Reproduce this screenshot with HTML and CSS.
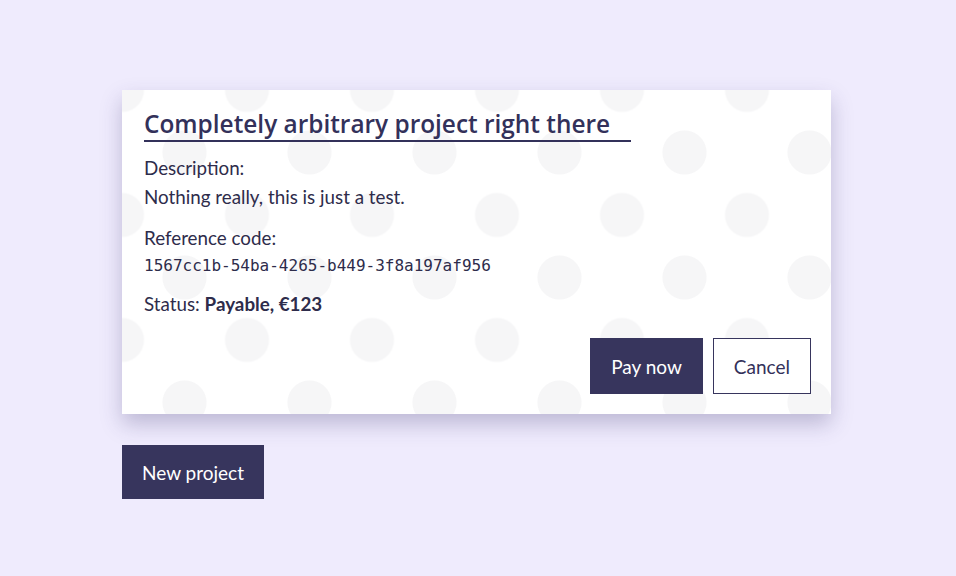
FILE: index.html
```html
<!DOCTYPE html>
<html>
<head>
<meta charset="utf-8">
<link rel="stylesheet" href="styles.css">
</head>
<body>
<main class="wrap">
  <section class="card">
    <h2 class="title">Completely arbitrary project right there</h2>
    <div class="field">
      <div class="label">Description:</div>
      <div class="value">Nothing really, this is just a test.</div>
    </div>
    <div class="field">
      <div class="label">Reference code:</div>
      <div class="code">1567cc1b-54ba-4265-b449-3f8a197af956</div>
    </div>
    <div class="field status">Status: <strong>Payable, €123</strong></div>
    <div class="actions">
      <button class="btn btn-primary">Pay now</button>
      <button class="btn btn-outline">Cancel</button>
    </div>
  </section>
  <button class="btn btn-primary btn-new">New project</button>
</main>
</body>
</html>
```
FILE: styles.css
```css
html, body {
  margin: 0;
  padding: 0;
}
body {
  background: #efebfd;
  font-family: "Lato", "Open Sans", sans-serif;
  color: #2e2c4b;
  width: 956px;
  height: 576px;
  overflow: hidden;
}
.wrap {
  width: 709px;
  margin: 90px 0 0 122px;
  display: flex;
  flex-direction: column;
  align-items: flex-start;
}
.card {
  align-self: stretch;
  background-color: #ffffff;
  background-image:
    radial-gradient(circle, #f6f6f7 21.5px, rgba(246,246,247,0) 22.5px),
    radial-gradient(circle, #f6f6f7 21.5px, rgba(246,246,247,0) 22.5px);
  background-size: 125px 125px;
  background-position: 0 0, -62.5px -62.5px;
  padding: 18px 20px 20px 22px;
  box-shadow: 0 10px 20px rgba(60, 55, 110, 0.28);
}
.title {
  display: inline-block;
  margin: 0;
  padding-right: 21px;
  font-family: "Open Sans", "Lato", sans-serif;
  font-weight: 600;
  font-size: 24.4px;
  line-height: 32px;
  color: #33315a;
  border-bottom: 2px solid #33315a;
}
.field {
  margin-top: 12px;
  font-size: 18.8px;
  line-height: 29px;
}
.field:first-of-type {
  margin-top: 11px;
}
.field.status {
  margin-top: 10px;
}
.code {
  font-family: "DejaVu Sans Mono", monospace;
  font-size: 16px;
  line-height: 27px;
}
.status strong {
  font-weight: 700;
  color: #2e2c4b;
}
.actions {
  display: flex;
  justify-content: flex-end;
  gap: 10px;
  margin-top: 20px;
}
.btn {
  height: 56px;
  padding: 0 20px;
  font-family: "Lato", sans-serif;
  font-size: 19px;
  border: 1px solid #37355d;
  cursor: pointer;
}
.btn-primary {
  background: #37355d;
  color: #ffffff;
}
.btn-outline {
  background: #ffffff;
  color: #33315a;
}
.btn-new {
  margin-top: 31px;
  height: 54px;
  padding: 0 19px;
}
```
